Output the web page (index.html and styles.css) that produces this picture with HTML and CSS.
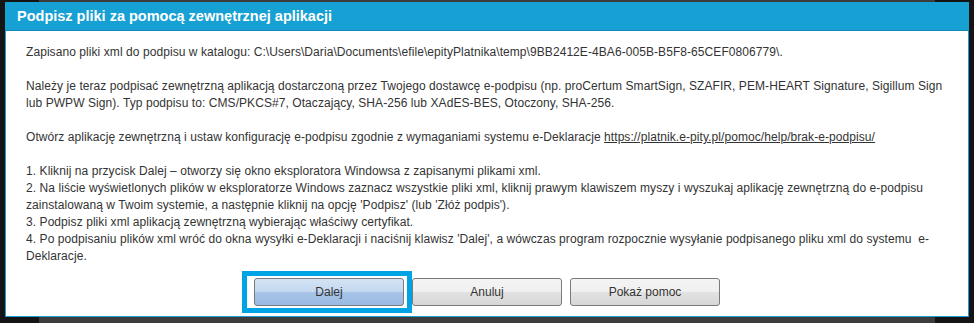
FILE: index.html
```html
<!DOCTYPE html>
<html lang="pl">
<head>
    <meta charset="UTF-8">
    <meta name="viewport" content="width=device-width, initial-scale=1.0">
    <title>Podpisz pliki za pomocą zewnętrznej aplikacji</title>
    <link rel="stylesheet" href="styles.css">
</head>
<body>
    <div class="dialog">
        <div class="dialog-title">Podpisz pliki za pomocą zewnętrznej aplikacji</div>
        <div class="dialog-body">
            <div class="message">
                Zapisano pliki xml do podpisu w katalogu: C:\Users\Daria\Documents\efile\epityPlatnika\temp\9BB2412E-4BA6-005B-B5F8-65CEF0806779\.<br><br>
                Należy je teraz podpisać zewnętrzną aplikacją dostarczoną przez Twojego dostawcę e-podpisu (np. proCertum SmartSign, SZAFIR, PEM-HEART Signature, Sigillum Sign lub PWPW Sign). Typ podpisu to: CMS/PKCS#7, Otaczający, SHA-256 lub XAdES-BES, Otoczony, SHA-256.<br><br>
                Otwórz aplikację zewnętrzną i ustaw konfigurację e-podpisu zgodnie z wymaganiami systemu e-Deklaracje <a href="#">https://platnik.e-pity.pl/pomoc/help/brak-e-podpisu/</a><br><br>
                1. Kliknij na przycisk Dalej – otworzy się okno eksploratora Windowsa z zapisanymi plikami xml.<br>
                2. Na liście wyświetlonych plików w eksploratorze Windows zaznacz wszystkie pliki xml, kliknij prawym klawiszem myszy i wyszukaj aplikację zewnętrzną do e-podpisu zainstalowaną w Twoim systemie, a następnie kliknij na opcję 'Podpisz' (lub 'Złóż podpis').<br>
                3. Podpisz pliki xml aplikacją zewnętrzną wybierając właściwy certyfikat.<br>
                4. Po podpisaniu plików xml wróć do okna wysyłki e-Deklaracji i naciśnij klawisz 'Dalej', a wówczas program rozpocznie wysyłanie podpisanego pliku xml do systemu &nbsp;e-Deklaracje.
            </div>
            <div class="buttons">
                <button class="btn btn-primary focused">Dalej</button>
                <button class="btn">Anuluj</button>
                <button class="btn">Pokaż pomoc</button>
            </div>
        </div>
    </div>
</body>
</html>
```

FILE: styles.css
```css
body {
    margin: 0;
    height: 323px;
    overflow: hidden;
    font-family: "Liberation Sans", Arial, sans-serif;
    background: linear-gradient(to right, #141414 39px, #3c3c3c 39px, #3c3c3c 935px, #141414 935px);
}
.dialog {
    margin: 2px 5px 0 5px;
    height: 315px;
    box-sizing: border-box;
    border: 1px solid #1a9fd4;
    border-top: none;
    background: #fff;
    display: flex;
    flex-direction: column;
}
.dialog-title {
    background: #17a0d3;
    border-bottom: 1px solid #1289b8;
    color: #fff;
    font-weight: bold;
    font-size: 14.5px;
    height: 28px;
    line-height: 28px;
    padding-left: 12px;
    margin: 0 -1px;
}
.dialog-body {
    flex: 1;
    padding: 13px 24px 0 20px;
    display: flex;
    flex-direction: column;
}
.message {
    font-size: 12px;
    line-height: 17px;
    letter-spacing: 0.07px;
    color: #333;
}
.message a {
    color: #333;
}
.buttons {
    display: flex;
    justify-content: center;
    gap: 8px;
    margin-top: 13px;
    padding-left: 4px;
}
.btn {
    position: relative;
    width: 150px;
    height: 28px;
    border: 1px solid #7a7a7a;
    border-radius: 3px;
    font-family: "Liberation Sans", Arial, sans-serif;
    font-size: 12px;
    color: #333;
    background: linear-gradient(#f4f4f4, #f0f0f0 50%, #e2e2e2 50%, #d6d6d6);
}
.btn-primary {
    background: linear-gradient(#d3e3f4, #c3d8ef 50%, #a8c5e8 50%, #9ab9e2);
}
.focused::after {
    content: "";
    position: absolute;
    left: -13px;
    right: -9px;
    top: -8px;
    bottom: -8px;
    border: 5px solid #00a3e4;
}
```
